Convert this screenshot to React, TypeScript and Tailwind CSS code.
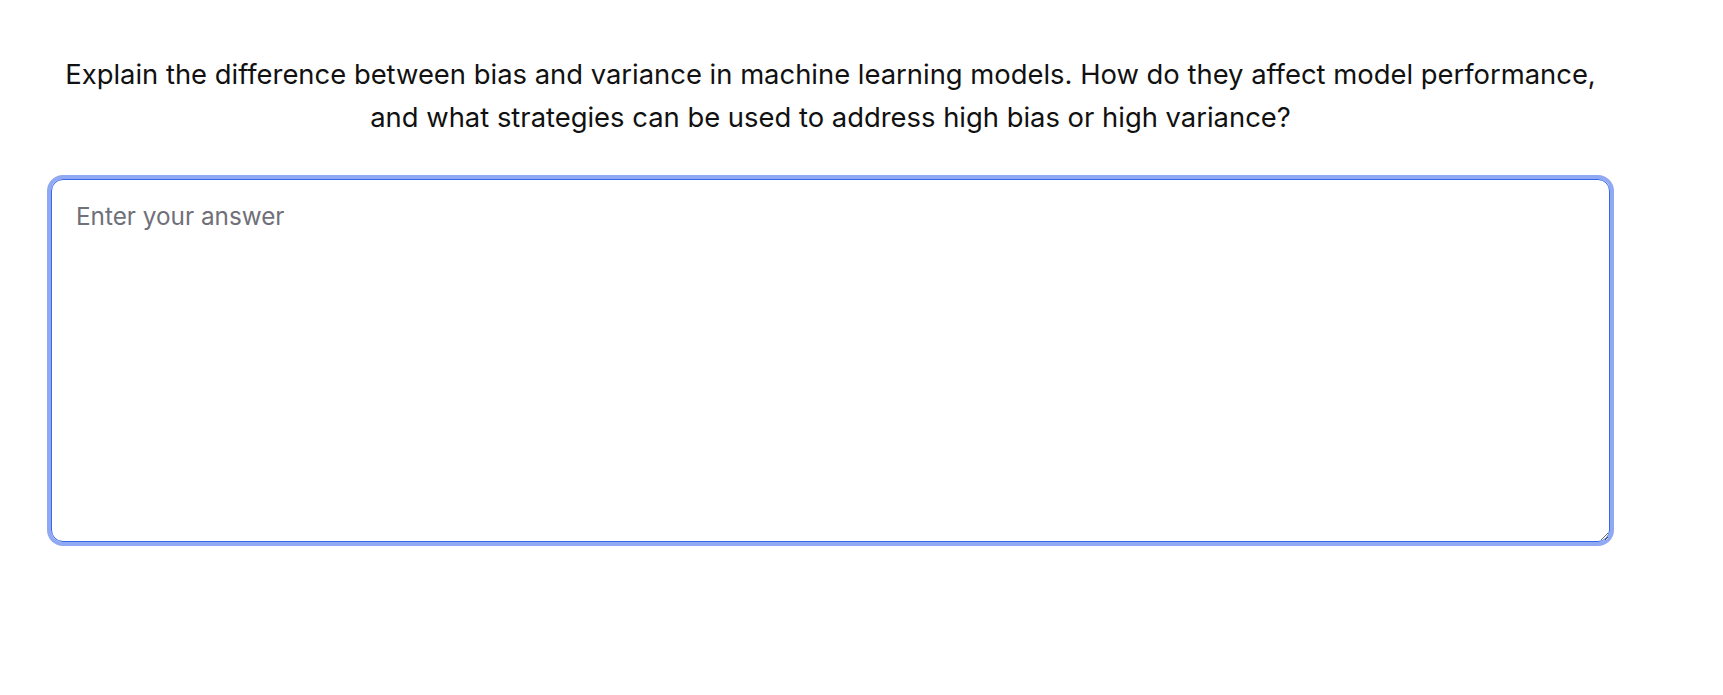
export default function App() {
  return (
    <div className="min-h-[695px] w-full bg-white font-['Inter','Liberation_Sans',sans-serif]">
      <div className="ml-[51px] w-[1559px] pt-[53px]">
        <p className="text-center text-[27.4px] leading-[42.6px] text-[#111111]">
          Explain the difference between bias and variance in machine learning models. How do they affect model performance, and what strategies can be used to address high bias or high variance?
        </p>
        <textarea
          placeholder="Enter your answer"
          className="mt-[41px] block h-[363px] w-full resize rounded-[12px] border-[1.5px] border-[#3468e6] px-[24px] py-[18px] text-[24.3px] leading-[36.5px] text-[#111111] shadow-[0_0_0_4px_#91a9f3] outline-none placeholder:text-[#6f7079]"
        />
      </div>
    </div>
  );
}
